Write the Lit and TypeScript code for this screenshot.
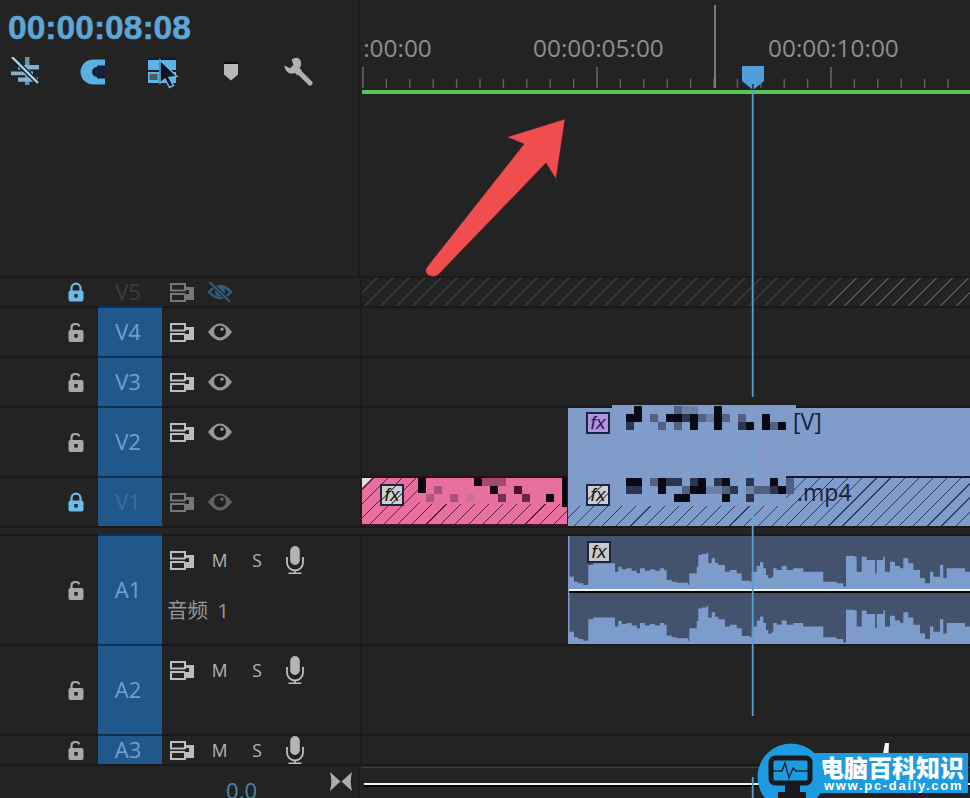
import { LitElement, html, css, svg } from "lit";
import { customElement } from "lit/decorators.js";

type Track = {
  id: string;
  size: string;
  locked?: boolean;
  audio?: boolean;
  dim?: boolean;
  hidden?: boolean;
  label?: string;
  lane: unknown;
};

const lockIcon = (locked: boolean) => html`<svg class="lock ${locked ? "on" : "off"}" viewBox="0 0 16 20" width="16" height="20">
  ${locked
    ? svg`<path d="M3.5 10V6.2a4.5 4.5 0 0 1 9 0V10" fill="none" stroke="currentColor" stroke-width="2.2"/>`
    : svg`<path d="M3.5 9V5.5A3.6 3.6 0 0 1 7 2h1.2a3.4 3.4 0 0 1 3.2 2.4" fill="none" stroke="currentColor" stroke-width="2.2"/>`}
  <rect x="0.5" y="${locked ? 8.5 : 8}" width="15" height="${locked ? 11 : 12}" rx="2" fill="currentColor"/>
  <rect x="6.3" y="12" width="3.4" height="3.6" fill="#222"/>
</svg>`;

const targetIcon = (dim?: boolean) => html`<svg class="target ${dim ? "dimmed" : ""}" viewBox="0 0 24 19" width="24" height="19">
  <rect x="1" y="1" width="14" height="6.5" fill="none" stroke="currentColor" stroke-width="2"/>
  <rect x="1" y="11" width="14" height="7" fill="none" stroke="currentColor" stroke-width="2"/>
  <path d="M15 4h9v13h-9v-4h-1v-2h5V7h-4z" fill="currentColor"/>
  <rect x="15" y="8" width="4" height="3" fill="#232323"/>
</svg>`;

const eyeIcon = (dim?: boolean) => html`<svg class="eye ${dim ? "dimmed" : ""}" viewBox="0 0 24 18" width="24" height="18">
  <path d="M0 9Q12 -8 24 9Q12 26 0 9Z" fill="currentColor"/>
  <circle cx="12" cy="8.6" r="6" fill="#1c1c1c"/>
  <circle cx="14" cy="6.2" r="1.6" fill="#a0a0a0"/>
</svg>`;

const eyeOffIcon = () => html`<svg class="eye-off" viewBox="0 0 24 22" width="24" height="22">
  <path d="M1 11Q12 -1 23 11Q12 23 1 11Z" fill="none" stroke="currentColor" stroke-width="2.4"/>
  <circle cx="12" cy="10.6" r="5" fill="currentColor"/>
  <path d="M2 1L22 21" stroke="#232323" stroke-width="4.2"/>
  <path d="M1.5 1L22 21" stroke="currentColor" stroke-width="2.2"/>
</svg>`;

const micIcon = () => html`<svg class="mic" viewBox="0 0 18 28" width="18" height="28">
  <rect x="4.2" y="0" width="9.6" height="19" rx="4.8" fill="#b4b4b4"/>
  <path d="M1 11v5.5a8 8 0 0 0 16 0V11" fill="none" stroke="#bdbdbd" stroke-width="1.8"/>
  <path d="M9 24.5V27M2.5 27.3h13" stroke="#bdbdbd" stroke-width="1.6" fill="none"/>
</svg>`;

const fxBadge = (kind: string) => html`<span class="fx ${kind}">fx</span>`;

const mosaicColors: Record<string, string> = { k: "#080a14", d: "#2c3650", g: "#4f6082", l: "#6a80a6" };

const mosaicGrid = (rows: string[], width: number, rise = false) => html`<svg class="mosaic" width="${width}" height="${rows.length * 8}">
  ${rise ? svg`<rect x="-14" y="-1" width="184" height="3" fill="#7f9ccb"/>` : null}
  ${rows.map((row, r) =>
    [...row].map((c, i) =>
      c === "." ? null : svg`<rect x="${i * 8}" y="${r * 8}" width="8" height="8" fill="${mosaicColors[c]}"/>`
    )
  )}
</svg>`;

const upperMosaic = [
  ".k....gll..k........",
  "kk.g.kkdkglkg.g..k..",
  "d...g.g.k..k..dk.kgk",
];
const lowerMosaic = [
  "kk.gkdd.dk.dk..d..k.g",
  "dd..k..gkkllgd.lggdkg",
  "......kk....k..d.....",
];

const pinkRects: [number, number, number, number, string][] = [
  [0, 0, 8, 15, "#0c0610"],
  [56, 0, 8, 8, "#14060f"],
  [64, 0, 24, 8, "#a04a74"],
  [16, 8, 8, 8, "#a84f7e"],
  [8, 16, 8, 8, "#b0587f"],
  [32, 16, 8, 8, "#a84f7e"],
  [48, 16, 8, 8, "#c97098"],
  [72, 8, 8, 8, "#14060f"],
  [80, 16, 8, 8, "#7a2d55"],
  [96, 8, 8, 8, "#4a1030"],
  [104, 16, 8, 8, "#6a2548"],
  [128, 16, 8, 8, "#10060c"],
  [144, 0, 5, 29, "#0c0610"],
];

const wavePoints: [number, number][] = [
  [24, 140], [42, 155], [55, 160], [70, 165], [85, 105], [100, 100], [160, 100], [165, 125], [175, 110], [185, 118], [200, 115], [215, 122], [230, 130], [240, 115], [255, 122], [270, 118], [285, 122], [300, 115], [312, 120], [320, 150], [335, 155], [350, 158], [385, 165], [388, 130], [410, 110], [415, 75], [425, 72], [440, 68], [445, 100], [455, 85], [465, 98], [475, 105], [495, 125], [510, 120], [530, 130], [545, 152], [570, 155], [575, 125], [590, 108], [600, 97], [610, 115], [618, 135], [625, 145], [635, 140], [640, 115], [650, 120], [665, 108], [680, 120], [700, 115], [730, 125], [775, 125], [790, 155], [830, 160], [850, 170], [858, 78], [885, 80], [890, 125], [905, 80], [920, 90], [945, 130], [950, 90], [970, 80], [975, 125], [990, 95], [1005, 108], [1020, 115], [1030, 85], [1045, 100], [1060, 120], [1080, 145], [1095, 160], [1110, 125], [1120, 140], [1140, 105], [1150, 145], [1160, 115], [1200, 115], [1215, 125], [1230, 140],
];

const wavePath = (lane: "top" | "bottom") => {
  const y = (zy: number) => (lane === "top" ? zy / 3 - 6 : 108.3 - ((175 - zy) * 1.07) / 3);
  const base = lane === "top" ? 53 : 108;
  let d = `M0 ${base}`;
  wavePoints.forEach(([zx, zy]) => {
    d += `H${(zx / 3 - 8).toFixed(1)}V${y(zy).toFixed(1)}`;
  });
  return d + `H402V${base}Z`;
};

const tickMarks = () => {
  const out: unknown[] = [];
  for (let i = 0; i < 27; i++) {
    const x = i * 23.4;
    const major = i % 10 === 0;
    out.push(svg`<line x1="${x + 1}" x2="${x + 1}" y1="${major ? 67 : 79}" y2="88" stroke="${major ? "#6e6e6e" : "#626262"}" stroke-width="1.4"/>`);
  }
  return out;
};

@customElement("app-root")
export class AppRoot extends LitElement {
  static styles = css`
    :host {
      display: block;
      width: 970px;
      height: 798px;
      overflow: hidden;
      position: relative;
      background: #232323;
      font-family: "Open Sans", "Noto Sans CJK SC", sans-serif;
    }
    .top,
    .row,
    .footer {
      display: grid;
      grid-template-columns: 360px 1fr;
    }
    .side {
      border-right: 2px solid #1c1c1c;
      box-sizing: content-box;
    }
    .top {
      height: 276px;
      grid-template-rows: 96px 180px;
    }
    .tools {
      padding: 13px 0 0 8px;
      box-sizing: border-box;
      width: 360px;
      height: 96px;
    }
    .timecode {
      font-family: "Liberation Sans", sans-serif;
      font-weight: 700;
      font-size: 33.6px;
      line-height: 30px;
      color: #5da6d6;
      -webkit-text-stroke: 0.5px #5da6d6;
    }
    .toolbar {
      display: flex;
      align-items: flex-start;
      margin: 14px 0 0 3px;
    }
    .toolbar svg {
      display: block;
      flex: none;
    }
    .magnet { margin: 2px 0 0 41px; }
    .link { margin: 0 0 0 42px; }
    .marker { margin: 5px 0 0 44px; }
    .wrench { margin: 0 0 0 46px; }
    .ruler {
      position: relative;
      overflow: hidden;
      margin-left: 2px;
      height: 96px;
    }
    .ticks {
      position: absolute;
      inset: 0;
    }
    .stamp {
      position: absolute;
      top: 31px;
      font-size: 24.4px;
      line-height: 34px;
      color: #8e8e8e;
      white-space: nowrap;
    }
    .green {
      position: absolute;
      left: 0;
      right: 0;
      top: 90px;
      height: 4px;
      background: #5cc25a;
      border-bottom: 1px solid #1b2e1b;
    }
    .row {
      border-top: 2px solid #1a1a1a;
      box-sizing: border-box;
      grid-template-rows: minmax(0, 1fr);
    }
    .h30 { height: 30px; }
    .h50 { height: 50px; }
    .h70 { height: 70px; }
    .h90 { height: 90px; }
    .h110 { height: 110px; }
    .spacer-row {
      height: 8px;
      border-top: 2px solid #1a1a1a;
      box-sizing: border-box;
      background: #252525;
    }
    .head {
      display: grid;
      grid-template-columns: 98px 64px 1fr;
      grid-template-rows: minmax(0, 1fr);
      width: 360px;
    }
    .lock-cell {
      display: flex;
      align-items: center;
      justify-content: flex-end;
      padding-right: 14px;
    }
    .lock.on { color: #6cbce8; }
    .lock.off { color: #a8a8a8; }
    .name {
      display: flex;
      align-items: center;
      justify-content: center;
      padding: 0 4px 2px 0;
      font-size: 22px;
      line-height: 24px;
      color: #6ea0d2;
      background: #20588c;
      box-shadow: 0 -2px 0 #10304f;
    }
    .name.dim { color: #3f6d9b; }
    .name.bare {
      background: none;
      box-shadow: none;
      color: #3d3d3d;
    }
    .controls {
      display: flex;
      flex-direction: column;
      padding-left: 8px;
    }
    .strip {
      display: flex;
      align-items: center;
      gap: 13.5px;
      height: 48px;
      flex: none;
    }
    .h30 .strip { height: 28px; }
    .strip > * { flex: none; }
    .target { color: #bcbcbc; }
    .eye { color: #979797; }
    .dimmed { opacity: 0.55; }
    .eye-off { color: #2f5f7c; }
    .letter {
      width: 24px;
      text-align: center;
      font-size: 17.5px;
      line-height: 24px;
      color: #b4b4b4;
    }
    .mic { margin: 0 3px; }
    .audio-label {
      margin: 12px 0 0 -3px;
      font-size: 20.5px;
      line-height: 28px;
      color: #969696;
      word-spacing: 4px;
    }
    .lane {
      display: flex;
      min-width: 0;
      margin-left: 2px;
    }
    .hatched {
      background: repeating-linear-gradient(135deg, transparent 0 10.3px, #525252 10.3px 11.3px);
    }
    .lead {
      flex: 0 0 206px;
    }
    .clip {
      box-sizing: border-box;
      display: flex;
      align-items: flex-start;
      min-width: 0;
      color: #17203a;
      font-size: 23px;
      line-height: 26px;
    }
    .clip .mosaic {
      display: block;
      flex: none;
      overflow: visible;
    }
    .clip-v2 {
      flex: 1;
      padding: 4px 0 0 18px;
      background: #7f9ccb;
    }
    .clip-v2 .mosaic {
      margin: -6px 0 0 16px;
    }
    .clip-v2 .tail {
      margin: -4px 0 0 -1px;
    }
    .lane-v1 {
      margin-top: -2px;
    }
    .clip-pink {
      flex: 0 0 205px;
      margin-right: 1px;
      padding: 8px 0 0 18px;
      background:
        linear-gradient(135deg, #e0e0e0 0 7px, transparent 7px) 0 2px / 12px 12px no-repeat,
        linear-gradient(#e8709f, #e8709f) 58px 2px / 147px 26px no-repeat,
        linear-gradient(#4d0e2e, #4d0e2e) 0 100% / 100% 2px no-repeat,
        linear-gradient(#2e0a1c, #2e0a1c) 0 0 / 100% 2px no-repeat,
        repeating-linear-gradient(135deg, transparent 0 9.1px, #5e1a40 9.1px 10px),
        #e8709f;
    }
    .clip-pink .mosaic {
      margin: -6px 0 0 14px;
    }
    .clip-blue {
      flex: 1;
      padding: 8px 0 0 18px;
      background:
        linear-gradient(#7f9ccb, #7f9ccb) 0 0 / 218px 30px no-repeat,
        linear-gradient(#141a2e, #141a2e) 218px 0 / 100% 2px no-repeat,
        repeating-linear-gradient(135deg, transparent 0 9.1px, #2c3a62 9.1px 10px),
        #7f9ccb;
    }
    .clip-blue .mosaic {
      margin: -6px 0 0 16px;
    }
    .clip-blue .tail {
      margin: -5px 0 0 3px;
    }
    .clip-audio {
      flex: 1;
      position: relative;
      background: #43536e;
      padding: 0;
    }
    .clip-audio .wave {
      display: block;
      width: 402px;
      height: 108px;
      flex: none;
    }
    .clip-audio .fx {
      position: absolute;
      left: 19px;
      top: 5px;
    }
    .fx {
      flex: none;
      box-sizing: border-box;
      width: 24px;
      height: 22px;
      display: flex;
      align-items: center;
      justify-content: center;
      border: 2px solid #1c2544;
      font-family: "Liberation Sans", sans-serif;
      font-style: italic;
      font-size: 19px;
      line-height: 18px;
      color: #16161c;
    }
    .fx.purple {
      background: #b294dc;
      color: #2a1560;
    }
    .fx.grey { background: #c9c9c9; }
    .fx.grey-hatch {
      background: repeating-linear-gradient(135deg, #cfcfcf 0 9px, #6b6b6b 9px 10px);
    }
    .footer {
      height: 34px;
      border-top: 2px solid #1a1a1a;
      box-sizing: border-box;
    }
    .foot-side {
      display: flex;
      justify-content: flex-end;
      align-items: flex-start;
      padding-right: 6px;
      width: 360px;
      box-sizing: border-box;
      height: 32px;
    }
    .volume {
      margin: 9px 73px 0 0;
      font-size: 22px;
      line-height: 30px;
      color: #4e87ab;
    }
    .bowtie {
      margin-top: 6px;
    }
    .foot-lane {
      margin-left: 2px;
    }
    .foot-grey {
      height: 1px;
      background: #404040;
      margin-top: 1px;
    }
    .foot-white {
      height: 2px;
      background: #f2f2f2;
      margin: 15px 0 0 2px;
      border-bottom: 2px solid #000;
      box-sizing: content-box;
    }
    .overlay {
      position: absolute;
      inset: 0;
      pointer-events: none;
    }
    .logo {
      position: absolute;
      left: 757px;
      top: 742px;
      width: 213px;
      height: 56px;
    }
    .logo svg {
      position: absolute;
      left: 0;
      top: 0;
    }
    .logo-band {
      position: absolute;
      left: 53px;
      top: 11px;
      width: 158px;
      height: 40px;
      box-sizing: border-box;
      background: #1b9ce0;
      padding: 1px 0 0 10px;
      color: #fff;
      white-space: nowrap;
    }
    .logo-cn {
      font-family: "Noto Sans CJK SC", sans-serif;
      font-weight: 900;
      font-size: 24px;
      line-height: 25px;
    }
    .logo-en {
      font-family: "Liberation Sans", sans-serif;
      font-weight: 700;
      font-size: 13px;
      line-height: 13px;
      letter-spacing: 1.7px;
      margin-left: 4px;
    }
  `;

  private header(t: Track) {
    return html`<div class="head side">
      <div class="lock-cell">${lockIcon(!!t.locked)}</div>
      <div class="name ${t.dim ? "dim" : ""} ${t.hidden ? "bare" : ""}">${t.id}</div>
      <div class="controls">
        <div class="strip">
          ${targetIcon(t.dim || t.hidden)}
          ${t.audio
            ? html`<span class="letter">M</span><span class="letter">S</span>${micIcon()}`
            : t.hidden
            ? eyeOffIcon()
            : eyeIcon(t.dim)}
        </div>
        ${t.label ? html`<div class="audio-label">${t.label}</div>` : null}
      </div>
    </div>`;
  }

  private tracks(): Track[] {
    return [
      { id: "V5", size: "h30", locked: true, hidden: true, lane: html`<div class="lane hatched"></div>` },
      { id: "V4", size: "h50", lane: html`<div class="lane"></div>` },
      { id: "V3", size: "h50", lane: html`<div class="lane"></div>` },
      {
        id: "V2",
        size: "h70",
        lane: html`<div class="lane">
          <div class="lead"></div>
          <div class="clip clip-v2">
            ${fxBadge("purple")} ${mosaicGrid(upperMosaic, 168, true)}
            <span class="tail">[V]</span>
          </div>
        </div>`,
      },
      {
        id: "V1",
        size: "h50",
        locked: true,
        dim: true,
        lane: html`<div class="lane lane-v1">
          <div class="clip clip-pink">
            ${fxBadge("grey-hatch")}
            <svg class="mosaic" width="152" height="30">
              ${pinkRects.map(([x, y, w, h, c]) => svg`<rect x="${x}" y="${y}" width="${w}" height="${h}" fill="${c}"/>`)}
            </svg>
          </div>
          <div class="clip clip-blue">
            ${fxBadge("grey-hatch")} ${mosaicGrid(lowerMosaic, 168)}
            <span class="tail">.mp4</span>
          </div>
        </div>`,
      },
    ];
  }

  private audioTracks(): Track[] {
    return [
      {
        id: "A1",
        size: "h110",
        audio: true,
        label: "音频 1",
        lane: html`<div class="lane">
          <div class="lead"></div>
          <div class="clip clip-audio">
            <svg class="wave" viewBox="0 0 402 108">
              <path d="${wavePath("top")}" fill="#7c9ccc"/>
              <path d="${wavePath("bottom")}" fill="#7c9ccc"/>
              <rect x="0" y="0" width="1.5" height="108" fill="#7c9ccc"/>
              <rect x="1" y="53" width="401" height="2" fill="#f4f4f4"/>
              <rect x="1" y="55" width="401" height="2" fill="#050505"/>
            </svg>
            ${fxBadge("grey")}
          </div>
        </div>`,
      },
      { id: "A2", size: "h90", audio: true, lane: html`<div class="lane"></div>` },
      { id: "A3", size: "h30", audio: true, lane: html`<div class="lane"></div>` },
    ];
  }

  render() {
    const row = (t: Track) => html`<div class="row ${t.size}">${this.header(t)}${t.lane}</div>`;
    return html`
      <div class="top">
        <div class="tools side">
          <div class="timecode">00:00:08:08</div>
          <div class="toolbar">
            <svg width="28" height="28" viewBox="0 0 28 28">
              <path d="M14 0h4.5v28H14z" fill="#5f95ba"/>
              <path d="M7 8h21v4.6H7zM0 14.6h22v3.6H0zM7 20.4h20v4.4H7z" fill="#7fb2d3"/>
              <path d="M1 0L27 26" stroke="#1c1c1c" stroke-width="5"/>
              <path d="M1 0L27 26" stroke="#a6d2ee" stroke-width="2.4"/>
            </svg>
            <svg class="magnet" width="26" height="26" viewBox="0 0 26 26">
              <path d="M25 0.5H13A12.5 12.5 0 0 0 13 25.5H25Z" fill="#5ab0e2"/>
              <path d="M25 8H17a5 5 0 0 0 0 10h8Z" fill="#13233a"/>
              <path d="M17 6.4h8v1.6h-8ZM17 18h8v1.6h-8Z" fill="#0f1b2d"/>
            </svg>
            <svg class="link" width="32" height="32" viewBox="0 0 32 32">
              <rect x="0" y="1" width="28" height="2" fill="#0c1a2c"/>
              <rect x="0" y="3" width="11" height="10" fill="#5cb4e6"/>
              <rect x="14" y="3" width="14" height="10" fill="#5cb4e6"/>
              <rect x="0" y="15" width="11" height="11" fill="#5cb4e6"/>
              <rect x="1.6" y="17" width="8" height="6" fill="#47596e"/>
              <rect x="14" y="15" width="14" height="11" fill="#5cb4e6"/>
              <path d="M12 3V26L17 22L21.5 30.5L25.5 28.5L21 20.5L29 19.5Z" fill="#0b1522" stroke="#6dbbe8" stroke-width="1.4"/>
            </svg>
            <svg class="marker" width="14" height="19" viewBox="0 0 14 19">
              <rect x="0" y="0" width="14" height="2" fill="#0c0c0c"/>
              <path d="M0 2H14V12.5L7 18.5L0 12.5Z" fill="#b8b8b8"/>
            </svg>
            <svg class="wrench" width="29" height="29" viewBox="0 0 29 29">
              <path d="M12 12L26 26" stroke="#b0b0b0" stroke-width="5" stroke-linecap="round"/>
              <path d="M0.5 8.5L6 11.2L9.5 7.8L7.5 2.5Q13 -1 16 2.5Q18.6 6.5 15.6 11L18 14L13.5 18.5L11 16Q5.5 18 2.5 14Q0.5 11.8 0.5 8.5Z" fill="#b0b0b0"/>
            </svg>
          </div>
        </div>
        <div class="ruler">
          <svg class="ticks" width="608" height="96">
            ${tickMarks()}
            <line x1="353" x2="353" y1="5" y2="88" stroke="#7a7a7a" stroke-width="2"/>
          </svg>
          ${[-61, 171, 406].map(
            (x, i) => html`<span class="stamp" style="left:${x}px">${["00:00:00:00", "00:00:05:00", "00:00:10:00"][i]}</span>`
          )}
          <div class="green"></div>
        </div>
        <div class="side"></div>
      </div>
      ${this.tracks().map(row)}
      <div class="spacer-row"></div>
      ${this.audioTracks().map(row)}
      <div class="footer">
        <div class="foot-side side">
          <span class="volume">0.0</span>
          <svg class="bowtie" width="22" height="19" viewBox="0 0 22 19">
            <path d="M0 0L10.5 9.5L0 19Q2.5 9.5 0 0Z" fill="#acacac"/>
            <path d="M22 0L11.5 9.5L22 19Q19.5 9.5 22 0Z" fill="#acacac"/>
          </svg>
        </div>
        <div class="foot-lane">
          <div class="foot-grey"></div>
          <div class="foot-white"></div>
        </div>
      </div>

      <svg class="overlay" width="970" height="798" viewBox="0 0 970 798">
        <path d="M752.7 90V397M752.7 527V716M752.7 777V798" stroke="#5a9ecb" stroke-width="1.8" fill="none"/>
        <path d="M752.7 433V476M752.7 506V527" stroke="#6fa6d2" stroke-width="1.8" fill="none"/>
        <path d="M742 66H764V81L753 90L742 81Z" fill="#4f9ed8"/>
        <path d="M753 84V90" stroke="#10243a" stroke-width="1.4"/>
        <path d="M565 119L507 137L524 144L427 267Q424 272 428 275Q434 278 438 275L546 163L556 179Z" fill="#ef4d4e" stroke="#4a2020" stroke-width="0.6"/>
        <path d="M881 765L885 743H889L888 765Z" fill="#f4f4f4"/>
      </svg>

      <div class="logo">
        <div class="logo-band">
          <div class="logo-cn">电脑百科知识</div>
          <div class="logo-en">www.pc-daily.com</div>
        </div>
        <svg width="70" height="56" viewBox="0 0 70 56">
          <circle cx="34" cy="35" r="33.5" fill="#1b9ce0"/>
          <rect x="14" y="16" width="39" height="25" rx="4" fill="#1b9ce0" stroke="#1a1a1e" stroke-width="5"/>
          <path d="M16 29H25L28 21L32 36L36 26L39 29H51" fill="none" stroke="#10202e" stroke-width="1.4"/>
          <rect x="28" y="43" width="15" height="7" fill="#1a1a1e"/>
          <rect x="21" y="50" width="28" height="6" fill="#1a1a1e"/>
        </svg>
      </div>
    `;
  }
}
